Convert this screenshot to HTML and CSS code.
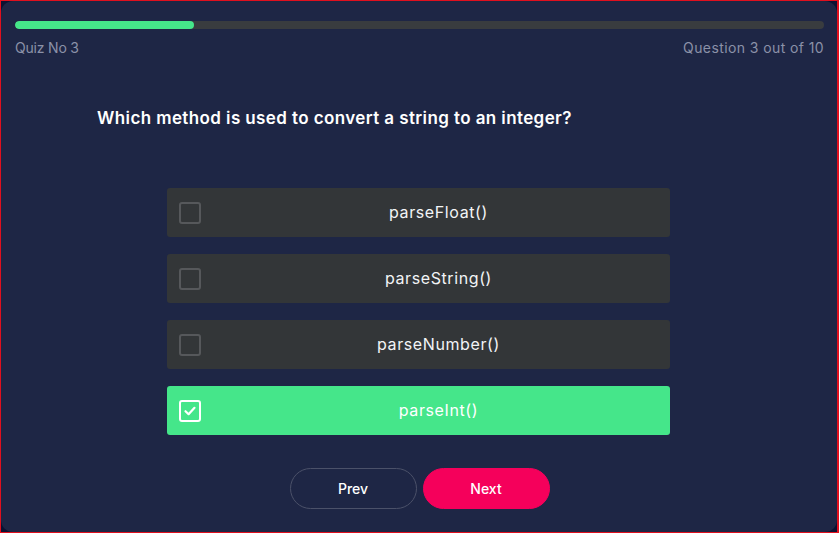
FILE: index.html
```html
<!DOCTYPE html>
<html>
<head>
<meta charset="utf-8">
<link rel="stylesheet" href="styles.css">
</head>
<body>
<div class="frame">
  <div class="card">
    <div class="progress"><div class="progress-fill" style="width:22.1%"></div></div>
    <div class="meta">
      <span>Quiz No 3</span>
      <span>Question 3 out of 10</span>
    </div>
    <h1 class="question">Which method is used to convert a string to an integer?</h1>
    <div class="options">
      <div class="option"><span class="box"></span><span class="label">parseFloat()</span></div>
      <div class="option"><span class="box"></span><span class="label">parseString()</span></div>
      <div class="option"><span class="box"></span><span class="label">parseNumber()</span></div>
      <div class="option selected"><span class="box"><svg viewBox="0 0 16 16" width="16" height="16"><path d="M3.5 8.2 L6.6 11.2 L12.5 4.8" fill="none" stroke="#fff" stroke-width="2.2" stroke-linecap="round" stroke-linejoin="round"/></svg></span><span class="label">parseInt()</span></div>
    </div>
    <div class="actions">
      <button class="btn prev">Prev</button>
      <button class="btn next">Next</button>
    </div>
  </div>
</div>
</body>
</html>
```
FILE: styles.css
```css
html, body {
  margin: 0;
  padding: 0;
  height: 100%;
}
body {
  background: #0c1232;
  font-family: "Inter", "Open Sans", sans-serif;
}
.frame {
  box-sizing: border-box;
  height: 533px;
  width: 839px;
  border: 1px solid #e0101e;
  border-right-width: 2px;
  background: #0c1232;
}
.card {
  box-sizing: border-box;
  height: 100%;
  background: #1e2645;
  border-radius: 12px;
  padding: 20px 13px 0 14px;
}
.progress {
  height: 8px;
  background: #393c3f;
  border-radius: 4px;
  overflow: hidden;
}
.progress-fill {
  height: 100%;
  background: #45e68a;
  border-radius: 4px;
}
.meta {
  display: flex;
  justify-content: space-between;
  margin-top: 10px;
  color: #8b91a8;
  font-size: 14px;
  letter-spacing: 0;
}
.meta span:first-child {
  letter-spacing: -0.2px;
}
.meta span:last-child {
  letter-spacing: 0.4px;
}
.question {
  margin: 52px 0 0 82px;
  color: #ffffff;
  font-size: 17px;
  font-weight: 600;
  letter-spacing: 0.4px;
}
.options {
  width: 503px;
  margin: 60px auto 0;
  display: flex;
  flex-direction: column;
  gap: 17px;
  position: relative;
  left: -1px;
}
.option {
  height: 49px;
  background: #333638;
  border-radius: 3px;
  display: flex;
  align-items: center;
  padding: 0 12px;
  box-sizing: border-box;
}
.box {
  width: 22px;
  height: 22px;
  box-sizing: border-box;
  border: 2px solid #56585b;
  border-radius: 3px;
  display: flex;
  align-items: center;
  justify-content: center;
  flex: none;
}
.label {
  flex: 1;
  text-align: center;
  color: #f2f4f6;
  font-size: 16px;
  font-weight: 400;
  letter-spacing: 0.6px;
  margin-bottom: 2px;
  padding-left: 18px;
}
.selected {
  background: #45e68a;
}
.selected .box {
  border-color: #ffffff;
}
.selected .label {
  color: #ffffff;
}
.actions {
  display: flex;
  justify-content: center;
  gap: 6px;
  margin-top: 33px;
}
.btn {
  width: 127px;
  height: 41px;
  border-radius: 21px;
  font-family: inherit;
  font-size: 14px;
  font-weight: 500;
  color: #ffffff;
  cursor: pointer;
}
.prev {
  background: transparent;
  border: 1px solid #4b5169;
}
.next {
  background: #f5005b;
  border: 1px solid #f5005b;
}
```
